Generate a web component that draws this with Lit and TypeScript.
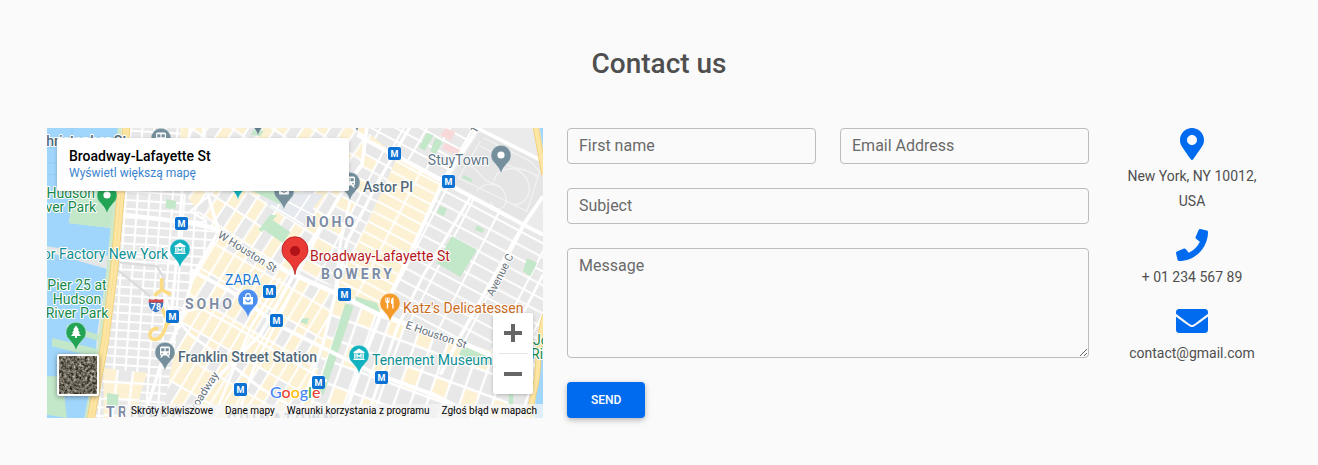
import { LitElement, html, svg, css } from "lit";
import { customElement } from "lit/decorators.js";

type Glyph = "dot" | "train" | "museum" | "tree" | "bag" | "food" | "school" | "none";

/* Street blocks: a tile is laid along two directions (u = across, v = down). */
interface Zone {
  id: string;
  area: string;
  matrix: string;
  w: number;
  h: number;
  road: number;
  fills: string[];
}

const GREY = "#e8e8e8";
const SAND = "#fdf1d3";
const COOL = "#e6eaee";

const ZONES: Zone[] = [
  { id: "hudson", area: "215,0 470,0 500,190 515,310 440,430 400,580 345,870 120,870 165,640 205,400", matrix: "matrix(1 .06 -.07 1 238 190)", w: 35, h: 26, road: 6, fills: [GREY, GREY, GREY, GREY] },
  { id: "tribeca", area: "170,720 300,735 280,800 270,870 170,870", matrix: "matrix(1 .06 -.12 1 180 610)", w: 46, h: 50, road: 7, fills: [SAND, GREY, SAND, SAND] },
  { id: "village", area: "400,0 960,0 945,110 740,440 500,310 400,180", matrix: "matrix(.84 .55 -.55 .84 480 190)", w: 34, h: 66, road: 6, fills: [GREY, SAND, SAND, GREY] },
  { id: "noho", area: "740,440 945,110 960,0 1100,0 1000,200 880,480", matrix: "matrix(.87 .48 -.46 .89 760 300)", w: 58, h: 36, road: 6, fills: [GREY, SAND, GREY, GREY] },
  { id: "soho", area: "510,310 740,440 865,500 800,870 345,870 400,580 440,430", matrix: "matrix(.86 .5 -.52 .86 460 420)", w: 34, h: 84, road: 6, fills: [SAND, GREY, SAND, SAND] },
  { id: "east", area: "1090,0 1300,0 1190,170 1000,570 865,500 1000,200", matrix: "matrix(.88 .47 -.46 .89 1030 90)", w: 100, h: 33, road: 6, fills: [SAND, SAND, SAND, SAND] },
  { id: "north", area: "950,0 1300,0 1190,170 1040,80", matrix: "matrix(.88 .47 -.5 .86 1030 70)", w: 60, h: 35, road: 6, fills: [GREY, GREY, GREY, GREY] },
  { id: "alphabet", area: "1190,165 1488,320 1488,720 1240,650 1000,570", matrix: "matrix(.88 .47 -.46 .89 1195 190)", w: 86, h: 37, road: 6, fills: [GREY, GREY, GREY, GREY] },
  { id: "lower", area: "865,500 1000,560 1488,720 1488,870 780,870", matrix: "matrix(.93 .34 -.33 .94 905 510)", w: 47, h: 66, road: 7, fills: [GREY, SAND, GREY, GREY] },
];

const PARKS = [
  "65,285 85,190 218,190 200,300 140,295",
  "0,860 0,745 45,745 60,870",
  "200,300 215,300 185,560 165,700 155,640",
  "15,630 160,665 155,690 15,655",
  "60,590 160,622 158,640 60,610",
  "615,188 700,188 715,235 690,225",
  "675,275 730,312 708,345 650,305",
  "670,260 690,262 645,312 635,305",
  "728,362 745,372 730,394 718,386",
  "358,212 388,220 385,244 356,240",
  "1215,325 1290,365 1240,447 1168,405",
  "1140,15 1160,22 1133,68 1115,58",
  "1165,30 1188,42 1165,80 1150,68",
  "1178,234 1200,242 1190,264 1170,256",
  "1250,142 1278,155 1272,163 1246,150",
  "1290,292 1312,303 1306,315 1284,305",
  "895,525 920,535 830,800 810,790 852,660",
  "925,505 990,525 1000,555 925,520",
  "1250,650 1340,690 1320,715 1236,680",
  "1440,390 1470,405 1450,445 1428,430",
  "765,572 785,570 780,590 760,582",
  "180,795 215,800 212,835 180,832",
  "1385,800 1400,780 1398,830 1385,830",
  "625,0 650,10 640,25 610,20",
];

const AVENUES: [string, number][] = [
  ["215,258 430,285 500,300 600,370 740,440 865,495 1000,562 1240,642 1350,690", 14],
  ["1296,-5 1186,165 1060,440 1000,562 950,690 890,870", 12],
  ["1090,-5 1000,150 900,340 865,500 830,640 790,760 750,870", 10],
  ["960,-5 945,110 880,200 740,440 640,620 520,740 430,870", 11],
  ["910,215 880,345 865,495", 9],
  ["1488,205 1430,290 1350,430 1240,625 1180,740", 11],
  ["1275,200 1130,440 1050,600 960,870", 9],
  ["930,20 1040,80 1190,162 1430,290 1488,320", 12],
  ["1190,-60 1310,10 1488,100", 11],
  ["430,0 405,190 395,340 370,580 400,600", 9],
  ["470,0 480,190 515,310 440,440 400,580 345,700 290,870", 10],
  ["430,425 560,495 700,595 870,680 980,735 1160,800 1300,870", 12],
  ["370,550 430,620 540,700 640,780 760,850", 9],
  ["380,560 460,540 570,600 700,680 840,760", 7],
  ["700,450 610,600 500,870", 8],
  ["760,440 700,560 620,720 570,870", 8],
  ["240,380 430,410", 7],
  ["500,190 430,250 480,280", 7],
  ["1488,440 1380,650", 8],
  ["340,420 345,480 370,550", 7],
];

const PINS: { x: number; y: number; c: string; g: Glyph }[] = [
  { x: 114, y: 10, c: "#758f9d", g: "train" },
  { x: 211, y: -11, c: "#637c8b", g: "none" },
  { x: 310, y: -15, c: "#637c8b", g: "none" },
  { x: 191, y: 53, c: "#12b1bf", g: "none" },
  { x: 237, y: 63, c: "#758f9d", g: "school" },
  { x: 303, y: 54, c: "#758f9d", g: "train" },
  { x: 454, y: 27, c: "#758f9d", g: "dot" },
  { x: 60, y: 67, c: "#23a455", g: "dot" },
  { x: 133, y: 121, c: "#12b1bf", g: "museum" },
  { x: 29, y: 204, c: "#23a455", g: "tree" },
  { x: 118, y: 224, c: "#758f9d", g: "train" },
  { x: 201, y: 171, c: "#4a8ff0", g: "bag" },
  { x: 343, y: 175, c: "#f39a2b", g: "food" },
  { x: 312, y: 227, c: "#12b1bf", g: "museum" },
];

const METRO: [number, number][] = [
  [347, 25], [401, 53], [134, 95], [222, 163], [229, 192],
  [297, 166], [125, 188], [193, 261], [271, 254], [334, 249],
];

const GLYPHS = {
  none: svg``,
  dot: svg`<circle r="3.6" fill="#fff" />`,
  train: svg`<path fill="#fff" fill-rule="evenodd" d="M-3.5-5.5h7a1.5 1.5 0 0 1 1.5 1.5v6a1.5 1.5 0 0 1-1.5 1.5l1.5 2h-1.8l-1.5-2h-3.4l-1.5 2H-5l1.5-2A1.5 1.5 0 0 1-5 2v-6a1.5 1.5 0 0 1 1.5-1.5zM-3.8-3.8V-.8H-.6V-3.8zM.6-3.8V-.8H3.8V-3.8zM-3 .8a.8.8 0 1 0 .1 1.6A.8.8 0 0 0-3 .8zM3 .8a.8.8 0 1 0 .1 1.6A.8.8 0 0 0 3 .8z" />`,
  museum: svg`<path fill="#fff" d="M0-6.5 5.5-3v1.2h-11V-3zM-4.8-1.2h1.4V3h-1.4zM3.4-1.2h1.4V3H3.4zM-5.5 3.6h11V5h-11z" /><path fill="none" stroke="#fff" stroke-width="1.2" d="M-2 3V-.6L0 1.6 2-.6V3" />`,
  tree: svg`<path fill="#fff" d="M0-6.5 3-2.3H1.8L4 .8H2.6L5 4H.9v2H-.9V4H-5L-2.6.8H-4l2.2-3.1H-3z" />`,
  bag: svg`<path fill="#fff" d="M-5-2H5v6.5a1 1 0 0 1-1 1h-8a1 1 0 0 1-1-1z" /><path fill="none" stroke="#fff" stroke-width="1.2" d="M-2.3-2v-1a2.3 2.3 0 0 1 4.6 0v1" /><path fill="none" stroke="#4a8ff0" stroke-width="1.2" d="M-2.2.4a2.2 2.2 0 0 0 4.4 0" />`,
  food: svg`<path fill="#fff" d="M-4.6-5.5h1v3.3h.6v-3.3h1v3.3h.6v-3.3h1v3.8c0 1-.6 1.5-1.4 1.8v5.4h-1.4V.1c-.8-.3-1.4-.8-1.4-1.8zM2.2 5.5h1.4v-11C2-5.3 1-4 1-2.2V.8h1.2z" />`,
  school: svg`<path fill="#fff" d="M-5-3.5H5V-2L0 .8-5-2zM-5-.8 0 2l5-2.8v3.3a1 1 0 0 1-1 1h-8a1 1 0 0 1-1-1z" />`,
};

@customElement("street-map")
export class StreetMap extends LitElement {
  static styles = css`
    :host { display: block; position: relative; overflow: hidden; min-height: 290px; font-family: Roboto, sans-serif; background: #e8e8e8; }
    .canvas { position: absolute; inset: 0; width: 100%; height: 100%; }
    .label { font-size: 14px; fill: #5c7485; }
    .halo { paint-order: stroke; stroke: #fff; stroke-width: 2px; stroke-linejoin: round; }
    .medium { font-weight: 500; fill: #526978; }
    .area { font-size: 14px; font-weight: 700; letter-spacing: 3px; fill: #7d8ca5; }
    .street { font-size: 11px; fill: #66717a; }
    .green { fill: #16894a; }
    .teal { fill: #0f8f93; }
    .red { fill: #b5161b; }
    .blue { fill: #1b78d2; }
    .orange { fill: #cb6b1d; }
    .metro { font-size: 9px; font-weight: 700; fill: #fff; text-anchor: middle; }
    .logo { font-family: Lato, sans-serif; font-size: 16px; font-weight: 500; }
    .end { text-anchor: end; }
    .mid { text-anchor: middle; }
    .card { position: absolute; top: 10px; left: 10px; box-sizing: border-box; width: 292px; padding: 9px 12px; background: #fff; border-radius: 2px; box-shadow: 0 1px 4px -1px rgba(0, 0, 0, 0.35); }
    .title { font-size: 14px; font-weight: 500; line-height: 18px; color: #000; }
    .more { display: block; font-size: 12px; line-height: 17px; color: #3a84cf; text-decoration: none; }
    .zoom { position: absolute; right: 10px; top: 185px; display: flex; flex-direction: column; align-items: center; width: 40px; background: #fff; border-radius: 2px; box-shadow: 0 1px 4px -1px rgba(0, 0, 0, 0.35); }
    .zoom button { display: grid; place-items: center; width: 40px; height: 40px; padding: 0; border: 0; background: none; cursor: pointer; }
    .rule { width: 30px; height: 1px; background: #e6e6e6; }
    .sat { position: absolute; left: 10px; bottom: 22px; box-sizing: border-box; width: 42px; height: 42px; padding: 0; border: 2px solid #fff; border-radius: 2px; background: #6b665b; box-shadow: 0 1px 5px rgba(0, 0, 0, 0.4); overflow: hidden; cursor: pointer; }
    .sat svg { display: block; }
    .terms { position: absolute; right: 0; bottom: 0; display: flex; background: rgba(245, 245, 245, 0.75); font-size: 10px; line-height: 14px; }
    .terms a { padding: 0 6px; color: #000; text-decoration: none; white-space: nowrap; }
  `;

  private zone(z: Zone) {
    const bw = z.w - z.road;
    const bh = z.h - z.road;
    return svg`
      <pattern id=${z.id} patternUnits="userSpaceOnUse" width=${z.w * 2} height=${z.h * 2} patternTransform=${z.matrix}>
        <rect width=${z.w * 2} height=${z.h * 2} fill="#fff" />
        ${z.fills.map((f, i) => svg`<rect x=${(i % 2) * z.w + z.road / 2} y=${Math.floor(i / 2) * z.h + z.road / 2} width=${bw} height=${bh} rx="1" fill=${f} />`)}
      </pattern>
      <polygon points=${z.area} fill="url(#${z.id})" />`;
  }

  private ground() {
    return svg`
      <g transform="scale(.33333)">
        <rect width="1488" height="870" fill="#ebebeb" />
        ${ZONES.map((z) => svg`${this.zone(z)}`)}
        <polygon points="670,185 830,200 760,290 660,230" fill=${COOL} />
        <g fill="none" stroke="#fff" stroke-width="5">
          <path d="M672 232 770 290M720 188 690 240M790 200 740 275M700 210 800 262" />
        </g>
        <polygon points="1300,10 1488,105 1488,200 1425,280 1205,160" fill="#e5e5e5" />
        <g fill="none" stroke="#f2f2f2" stroke-width="4">
          <path d="M1310 30 1450 100 1478 130 1440 250 1235 150 1300 40M1300 55c40 10 60 50 90 60s60 10 80 30M1290 190c20-30 70-30 85 10s-30 60-45 20M1340 160c10-40 60-50 90-20s20 90-30 90M1250 110c50 0 40 50 100 60" />
        </g>
        <polygon points="1195,0 1225,12 1212,38 1180,22" fill="#f8d9d9" />
        <polygon points="1195,45 1240,66 1228,82 1185,62" fill="#f8d9d9" />
        <path fill="#a0d6fb" d="M0 0H218L212 190H85L65 285 195 300 178 440 150 620 145 700 140 870H0z" />
        <path fill="none" stroke="#8fc8ee" stroke-width="2" d="M0 105H30M0 140H30M75 0V30M0 60 30 58M0 360 190 400M0 390 60 400" />
        <path fill="#e4e6e8" d="M0 355 190 385 188 425 0 372z" />
        ${PARKS.map((p) => svg`<polygon points=${p} fill="#c3e7c9" />`)}
        <g fill="none" stroke="#fff" stroke-linejoin="round">
          ${AVENUES.map(([p, w]) => svg`<polyline points=${p} stroke-width=${w} />`)}
        </g>
        <path fill="none" stroke="#dcdcdc" stroke-width="7" d="M180 400 310 505M190 400 330 415 350 450V490" />
        <path fill="none" stroke="#cfe8c9" stroke-width="12" d="M218 0 206 200 184 430 156 660 118 870" />
        <path fill="none" stroke="#f3cf77" stroke-width="24" d="M238 0 222 190 202 420 174 640 132 870" />
        <path fill="none" stroke="#fde5a3" stroke-width="19" d="M238 0 222 190 202 420 174 640 132 870" />
        <path fill="none" stroke="#f7d98d" stroke-width="2" d="M238 0 222 190 202 420 174 640 132 870" />
        <path fill="none" stroke="#fbdc85" stroke-width="11" stroke-linecap="round" d="M344 455V485L325 500M344 485 368 498M362 575C355 610 340 638 320 634S308 600 330 602M345 540 365 585" />
        <path fill="#a0d6fb" d="M1478 0H1488V60zM1480 600 1488 570V870H1462z" />
        <path fill="none" stroke="#f3cf77" stroke-width="18" d="M1466-5 1492 140M1495 560C1470 630 1478 720 1466 770S1450 840 1445 875" />
        <path fill="none" stroke="#fde5a3" stroke-width="13" d="M1466-5 1492 140M1495 560C1470 630 1478 720 1466 770S1450 840 1445 875" />
      </g>`;
  }

  private pin(x: number, y: number, c: string, g: Glyph) {
    return svg`
      <g transform="translate(${x} ${y})">
        <path fill=${c} stroke="#fff" stroke-opacity=".6" stroke-width=".6" d="M0 19C-1.2 13.5-3.6 11.6-6.4 8A10 10 0 1 1 6.4 8C3.6 11.6 1.2 13.5 0 19z" />
        ${GLYPHS[g]}
      </g>`;
  }

  private labels() {
    return svg`
      <g class="street halo">
        <text transform="translate(170 109) rotate(32)">W Houston St</text>
        <text transform="translate(358 200) rotate(19)">E Houston St</text>
        <text transform="translate(446 169) rotate(-63)">Avenue C</text>
        <text class="end" transform="translate(172 247) rotate(-57)">Broadway</text>
        <text transform="translate(429 6) rotate(-60)">1st Ave</text>
      </g>
      <g class="area halo">
        <text x="259" y="99">NOHO</text>
        <text x="274" y="151">BOWERY</text>
        <text x="138" y="181">SOHO</text>
        <text x="59" y="289">TRIBECA</text>
        <text x="180" y="296">CHINATOWN</text>
      </g>
      ${PINS.map((p) => this.pin(p.x, p.y, p.c, p.g))}
      <text class="logo halo" x="223" y="270"><tspan fill="#4285f4">G</tspan><tspan fill="#ea4335">o</tspan><tspan fill="#fbbc04">o</tspan><tspan fill="#4285f4">g</tspan><tspan fill="#34a853">l</tspan><tspan fill="#ea4335">e</tspan></text>
      ${METRO.map(([x, y]) => svg`
        <rect x=${x - 7} y=${y - 7} width="14" height="14" rx="2" fill="#fff" fill-opacity=".7" />
        <rect x=${x - 6} y=${y - 6} width="13" height="13" rx="2" fill="#0b72d3" />
        <text class="metro" x=${x + 0.5} y=${y + 4}>M</text>`)}
      <g>
        <path d="M102 171q3.500 1.500 7 0 3.500 1.500 7 0c2 6 0 11-7 14-7-3-9-8-7-14z" fill="#3b78c4" stroke="#fff" />
        <path d="M102 171q3.500 1.500 7 0 3.500 1.500 7 0l.6 3.500h-15.200z" fill="#cf4a4a" />
        <text class="metro" x="109" y="182">78</text>
      </g>
      <g class="label halo">
        <text class="end medium" x="80" y="18">Christopher St</text>
        <text class="end" x="442" y="37">StuyTown</text>
        <text class="medium" x="316" y="64">Astor Pl</text>
        <text class="medium" x="131" y="234">Franklin Street Station</text>
        <text class="green end" x="48" y="70">Hudson</text>
        <text class="green end" x="49" y="84">River Park</text>
        <text class="green mid" x="30" y="162">Pier 25 at</text>
        <text class="green mid" x="30" y="176">Hudson</text>
        <text class="green mid" x="30" y="190">River Park</text>
        <text class="green" x="486" y="217">John V.</text>
        <text class="green" x="484" y="231">River Park</text>
        <text class="teal end" x="121" y="131">Color Factory New York</text>
        <text class="teal" x="325" y="237">Tenement Museum</text>
        <text class="blue" x="178" y="157">ZARA</text>
        <text class="orange" x="356" y="185">Katz's Delicatessen</text>
        <text class="red" x="263" y="133">Broadway-Lafayette St</text>
      </g>
      <path fill="#ea3a35" stroke="#b5161b" stroke-width=".8" d="M248 146.500C247 139 244 136.500 240 132A13 13 0 1 1 256 132C252 136.500 249 139 248 146.500z" />
      <circle cx="248" cy="123" r="5" fill="#b01217" />`;
  }

  render() {
    return html`
      <svg class="canvas" viewBox="0 0 496 290" preserveAspectRatio="xMinYMin slice" role="img" aria-label="Broadway-Lafayette St">
        ${this.ground()} ${this.labels()}
      </svg>
      <div class="card">
        <div class="title">Broadway-Lafayette St</div>
        <a class="more" href="#map">Wyświetl większą mapę</a>
      </div>
      <div class="zoom">
        <button type="button" aria-label="+">
          <svg width="18" height="18" viewBox="0 0 18 18" fill="#666"><path d="M7 0h4v7h7v4h-7v7H7v-7H0V7h7z" /></svg>
        </button>
        <span class="rule"></span>
        <button type="button" aria-label="−">
          <svg width="18" height="18" viewBox="0 0 18 18" fill="#666"><path d="M0 7h18v4H0z" /></svg>
        </button>
      </div>
      <button class="sat" type="button" aria-label="Satelita">
        <svg width="38" height="38" viewBox="0 0 38 38">
          <filter id="grain" x="0" y="0" width="100%" height="100%" color-interpolation-filters="sRGB">
            <feTurbulence type="fractalNoise" baseFrequency=".35" numOctaves="4" seed="7" />
            <feColorMatrix values="1 .3 0 0 -.23  1 .3 0 0 -.25  1 .3 0 0 -.30  0 0 0 0 1" />
          </filter>
          <rect width="38" height="38" filter="url(#grain)" />
        </svg>
      </button>
      <div class="terms">
        <a href="#keys">Skróty klawiszowe</a>
        <a href="#data">Dane mapy</a>
        <a href="#terms">Warunki korzystania z programu</a>
        <a href="#report">Zgłoś błąd w mapach</a>
      </div>`;
  }
}

@customElement("app-root")
export class AppRoot extends LitElement {
  static styles = css`
    :host { display: block; box-sizing: border-box; min-height: 100vh; padding: 47px 35px; background: #fafafa; color: #4f4f4f; font-family: Roboto, sans-serif; }
    h2 { margin: 0 0 48px; font-size: 28px; font-weight: 500; line-height: 33px; text-align: center; }
    .row { display: grid; grid-template-columns: minmax(0, 5fr) minmax(0, 7fr); }
    .map { padding: 0 12px; display: grid; }
    .side { display: grid; grid-template-columns: minmax(0, 3fr) minmax(0, 1fr); }
    form { padding: 0 12px; display: grid; grid-template-columns: 1fr 1fr; gap: 24px; align-content: start; }
    .field { position: relative; display: flex; }
    .wide { grid-column: 1 / -1; }
    .control { box-sizing: border-box; width: 100%; min-width: 0; margin: 0; padding: 5px 11px; border: 1px solid #bdbdbd; border-radius: 4px; background: none; font: 16px/24px Roboto, sans-serif; color: #4f4f4f; outline: none; }
    .control:focus { border-color: #006bee; }
    input.control { height: 36px; }
    textarea.control { height: 110px; resize: vertical; }
    label { position: absolute; top: 6px; left: 12px; font-size: 16px; line-height: 24px; color: #6a6a6a; pointer-events: none; }
    .control:not(:placeholder-shown) + label { visibility: hidden; }
    .send { justify-self: start; height: 36px; padding: 0 24px; border: 0; border-radius: 4px; background: #006bee; color: #fff; font: 500 12px/18px Roboto, sans-serif; text-transform: uppercase; box-shadow: 0 2px 5px 0 rgba(0, 0, 0, 0.2), 0 2px 10px 0 rgba(0, 0, 0, 0.1); cursor: pointer; }
    .info { margin: 0; padding: 0 12px; list-style: none; display: flex; flex-direction: column; gap: 15px; text-align: center; font-size: 14px; line-height: 25px; }
    .info li { display: flex; flex-direction: column; align-items: center; gap: 4px; }
    .icon { display: block; height: 32px; fill: #006bee; }
  `;

  render() {
    return html`
      <h2>Contact us</h2>
      <div class="row">
        <div class="map"><street-map></street-map></div>
        <div class="side">
          <form @submit=${(e: Event) => e.preventDefault()}>
            <div class="field"><input class="control" id="name" type="text" placeholder=" " /><label for="name">First name</label></div>
            <div class="field"><input class="control" id="email" type="email" placeholder=" " /><label for="email">Email Address</label></div>
            <div class="field wide"><input class="control" id="subject" type="text" placeholder=" " /><label for="subject">Subject</label></div>
            <div class="field wide"><textarea class="control" id="message" placeholder=" "></textarea><label for="message">Message</label></div>
            <button class="send" type="submit">Send</button>
          </form>
          <ul class="info">
            <li>
              <svg class="icon" viewBox="0 0 384 512"><path d="M172.268 501.67C26.97 291.031 0 269.413 0 192 0 85.961 85.961 0 192 0s192 85.961 192 192c0 77.413-26.97 99.031-172.268 309.67-9.535 13.774-29.93 13.773-39.464 0zM192 272c44.183 0 80-35.817 80-80s-35.817-80-80-80-80 35.817-80 80 35.817 80 80 80z" /></svg>
              <span>New York, NY 10012, USA</span>
            </li>
            <li>
              <svg class="icon" viewBox="0 0 512 512"><path d="M493.4 24.6l-104-24c-11.3-2.6-22.9 3.3-27.500 13.900l-48 112c-4.200 9.800-1.400 21.300 6.900 28l60.600 49.600c-36 76.700-98.900 140.500-177.200 177.200l-49.600-60.600c-6.800-8.300-18.200-11.100-28-6.900l-112 48C3.900 366.500-2 378.100.6 389.400l24 104C27.100 504.200 36.700 512 48 512c256.100 0 464-207.500 464-464 0-11.200-7.700-20.900-18.600-23.400z" /></svg>
              <span>+ 01 234 567 89</span>
            </li>
            <li>
              <svg class="icon" viewBox="0 0 512 512"><path d="M502.300 190.800c3.900-3.100 9.700-.2 9.700 4.700V400c0 26.500-21.500 48-48 48H48c-26.500 0-48-21.500-48-48V195.600c0-5 5.700-7.800 9.700-4.700 22.400 17.400 52.100 39.500 154.100 113.600 21.100 15.400 56.700 47.800 92.200 47.600 35.700.3 72-32.800 92.300-47.600 102-74.100 131.600-96.300 154-113.700zM256 320c23.200.4 56.600-29.200 73.400-41.400 132.700-96.300 142.800-104.700 173.400-128.700 5.800-4.500 9.200-11.500 9.200-18.900v-19c0-26.500-21.500-48-48-48H48c-26.500 0-48 21.500-48 48v19c0 7.400 3.400 14.300 9.200 18.900 30.600 23.900 40.700 32.400 173.400 128.700 16.800 12.200 50.200 41.800 73.400 41.400z" /></svg>
              <span>contact@gmail.com</span>
            </li>
          </ul>
        </div>
      </div>`;
  }
}
